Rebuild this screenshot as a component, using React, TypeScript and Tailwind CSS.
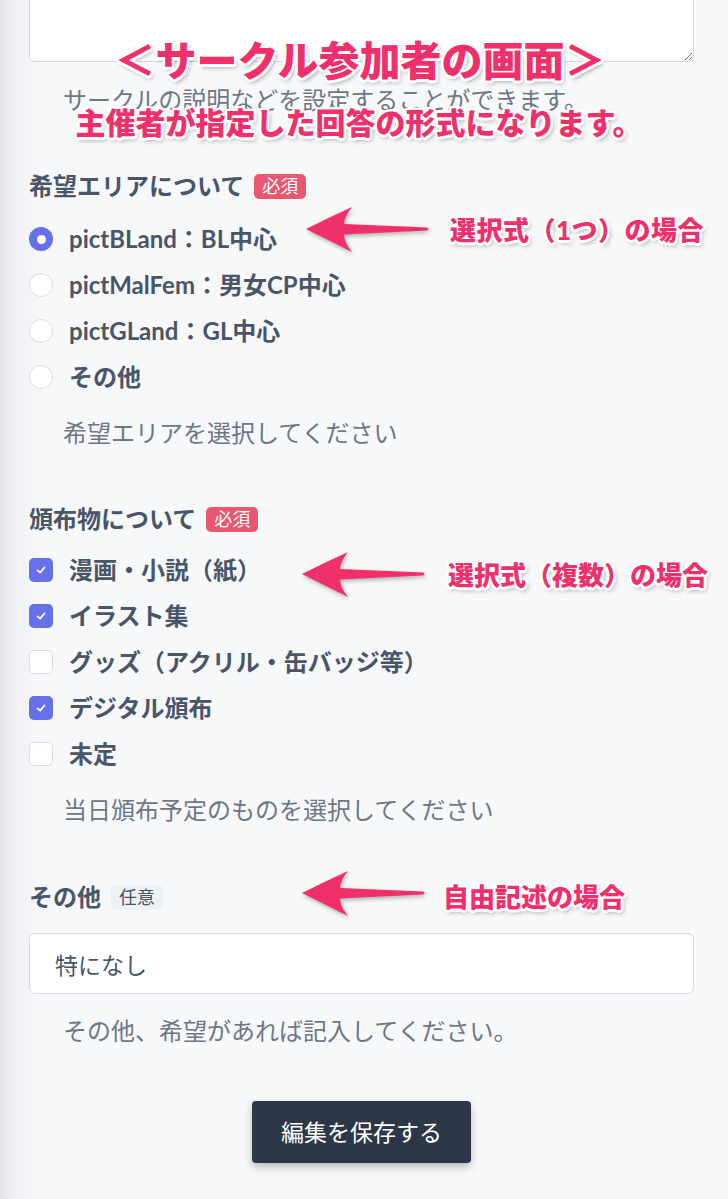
import { useState } from 'react'

const areaOptions = ['pictBLand：BL中心', 'pictMalFem：男女CP中心', 'pictGLand：GL中心', 'その他']
const itemOptions = ['漫画・小説（紙）', 'イラスト集', 'グッズ（アクリル・缶バッジ等）', 'デジタル頒布', '未定']

const pinkText =
  'text-[#f0306b] font-black [text-shadow:2.5px_0_0_#fff,-2.5px_0_0_#fff,0_2.5px_0_#fff,0_-2.5px_0_#fff,2px_2px_0_#fff,-2px_-2px_0_#fff,2px_-2px_0_#fff,-2px_2px_0_#fff,2px_3px_5px_rgba(0,0,0,0.4)]'

function Arrow({ className }: { className: string }) {
  return (
    <svg
      viewBox="0 0 125 46"
      className={`absolute w-[125px] h-[46px] drop-shadow-[1px_2px_2px_rgba(0,0,0,0.3)] ${className}`}
    >
      <path
        d="M0,22 Q22,11 46,0 Q38,10 38,17 L121,20.5 Q124,22 121,23.5 L38,27.5 Q38,35 46,45 Q22,33 0,22 Z"
        fill="#f0306b"
      />
    </svg>
  )
}

function Badge({ required }: { required: boolean }) {
  return required ? (
    <span className="ml-[10px] inline-flex h-[25px] items-center rounded-[5px] bg-[#e95870] px-[8px] text-[18px] font-normal text-white">
      必須
    </span>
  ) : (
    <span className="ml-[10px] inline-flex h-[25px] items-center rounded-[5px] bg-[#edf0f4] px-[8px] text-[18px] font-normal text-[#4a5568]">
      任意
    </span>
  )
}

export default function App() {
  const [area, setArea] = useState(0)
  const [items, setItems] = useState([true, true, false, true, false])

  return (
    <div
      className="relative min-h-[1199px] overflow-hidden bg-[linear-gradient(to_right,#e1e3e7,#eff1f4_16px,#f7f8fa_42px)] px-[29px] pr-[34px] text-[#4a5568]"
      style={{ fontFamily: 'Lato, "Noto Sans CJK JP", sans-serif' }}
    >
      {/* Textarea (cut off at top) */}
      <textarea
        className="block -mt-[58px] h-[120px] w-full rounded-[6px] border border-[#d6dae0] bg-white"
        defaultValue=""
      />
      <p className="mt-[22px] pl-[34px] text-[24px] leading-[32px] text-[#6f7784]">
        サークルの説明などを設定することができます。
      </p>

      {/* 希望エリア */}
      <div className="mt-[54px] flex items-center text-[24px] font-bold leading-[32px]">
        希望エリアについて
        <Badge required />
      </div>
      <div className="mt-[14px] flex flex-col">
        {areaOptions.map((opt, i) => (
          <label key={opt} className="flex h-[46px] cursor-pointer items-center" onClick={() => setArea(i)}>
            {area === i ? (
              <span className="flex h-[24px] w-[24px] items-center justify-center rounded-full bg-[#6670e8]">
                <span className="h-[9px] w-[9px] rounded-full bg-white" />
              </span>
            ) : (
              <span className="h-[24px] w-[24px] rounded-full border border-[#d9dde3] bg-white" />
            )}
            <span className="ml-[16px] text-[24px] font-bold">{opt}</span>
          </label>
        ))}
      </div>
      <p className="mt-[17px] pl-[34px] text-[24px] leading-[32px] text-[#6f7784]">希望エリアを選択してください</p>

      {/* 頒布物 */}
      <div className="mt-[54px] flex items-center text-[24px] font-bold leading-[32px]">
        頒布物について
        <Badge required />
      </div>
      <div className="mt-[12px] flex flex-col">
        {itemOptions.map((opt, i) => (
          <label
            key={opt}
            className="flex h-[46px] cursor-pointer items-center"
            onClick={() => setItems(items.map((v, j) => (j === i ? !v : v)))}
          >
            {items[i] ? (
              <span className="flex h-[24px] w-[24px] items-center justify-center rounded-[5px] bg-[#6670e8]">
                <svg viewBox="0 0 16 16" className="h-[14px] w-[14px]">
                  <path d="M4 8.5 L7 11 L12 5" fill="none" stroke="#fff" strokeWidth="2" strokeLinecap="round" strokeLinejoin="round" />
                </svg>
              </span>
            ) : (
              <span className="h-[24px] w-[24px] rounded-[5px] border border-[#d9dde3] bg-white" />
            )}
            <span className="ml-[16px] text-[24px] font-bold">{opt}</span>
          </label>
        ))}
      </div>
      <p className="mt-[17px] pl-[34px] text-[24px] leading-[32px] text-[#6f7784]">当日頒布予定のものを選択してください</p>

      {/* その他 */}
      <div className="mt-[55px] flex items-center text-[24px] font-bold leading-[32px]">
        その他
        <Badge required={false} />
      </div>
      <input
        className="mt-[20px] block h-[61px] w-full rounded-[6px] border border-[#d6dae0] bg-white px-[25px] text-[23px] text-[#4a5568] outline-none"
        defaultValue="特になし"
      />
      <p className="mt-[21px] pl-[34px] text-[24px] leading-[32px] text-[#6f7784]">その他、希望があれば記入してください。</p>

      <div className="mt-[54px] flex justify-center">
        <button className="h-[62px] rounded-[4px] bg-[#2d3748] px-[29px] text-[23px] text-white shadow-[0_4px_8px_rgba(0,0,0,0.25)]">
          編集を保存する
        </button>
      </div>

      {/* Annotations */}
      <div className={`absolute left-0 right-0 top-[35px] pr-[8px] text-center text-[41px] leading-[52px] ${pinkText}`}>
        ＜サークル参加者の画面＞
      </div>
      <div className={`absolute left-0 right-0 top-[104px] pr-[10px] text-center text-[30px] leading-[36px] ${pinkText}`}>
        主催者が指定した回答の形式になります。
      </div>

      <Arrow className="left-[306px] top-[207px]" />
      <div className={`absolute left-[450px] top-[213px] text-[26px] leading-[34px] tracking-[0.5px] ${pinkText}`}>選択式（1つ）の場合</div>

      <Arrow className="left-[302px] top-[552px]" />
      <div className={`absolute left-[448px] top-[558px] text-[26px] leading-[34px] ${pinkText}`}>選択式（複数）の場合</div>

      <Arrow className="left-[302px] top-[871px]" />
      <div className={`absolute left-[443px] top-[880px] text-[26px] leading-[34px] ${pinkText}`}>自由記述の場合</div>
    </div>
  )
}
